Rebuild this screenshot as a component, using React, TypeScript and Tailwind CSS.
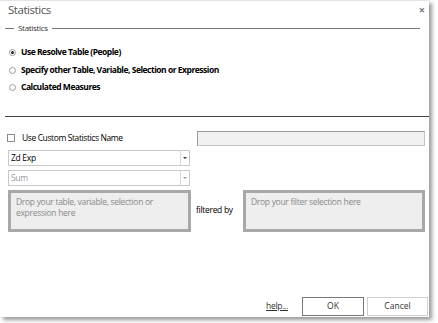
const font = { fontFamily: '"Segoe UI", "Open Sans", "Liberation Sans", sans-serif' };

function Radio({ checked, label }: { checked?: boolean; label: string }) {
  return (
    <div className="flex h-[17.5px] items-center pl-[9px]">
      <span className="flex h-[7px] w-[7px] items-center justify-center rounded-full border border-[#9a9a9a] bg-white">
        {checked && <span className="h-[3px] w-[3px] rounded-full bg-[#222]" />}
      </span>
      <span className="ml-[5px] text-[8.5px] font-bold tracking-[-0.48px] text-black">{label}</span>
    </div>
  );
}

function Select({ value, disabled }: { value: string; disabled?: boolean }) {
  return (
    <div className="flex h-[16px] w-[182px] border border-[#c8c8c8] bg-white">
      <span
        className={`flex-1 pl-[2px] text-[8.5px] leading-[14px] tracking-[-0.3px] ${
          disabled ? "text-[#9a9a9a]" : "text-black"
        }`}
      >
        {value}
      </span>
      <span className="flex w-[9px] items-center justify-center border-l border-[#d8d8d8]">
        <span
          className={`h-0 w-0 border-x-[2px] border-t-[2px] border-x-transparent ${
            disabled ? "border-t-[#999]" : "border-t-[#333]"
          }`}
        />
      </span>
    </div>
  );
}

function DropBox({ text, width }: { text: string; width: string }) {
  return (
    <div className={`${width} h-[42px] border-[3px] border-[#a8a8a8] bg-[#eeeeee] px-[5px] pt-[3px]`}>
      <p className="text-[8.5px] leading-[11px] tracking-[-0.3px] text-[#8a8a8a]">{text}</p>
    </div>
  );
}

export default function App() {
  return (
    <div className="h-[323px] w-[438px] bg-white" style={font}>
      <div className="flex h-[317px] w-[429px] flex-col border-t border-[#e4e4e4] bg-white shadow-[3px_3px_4px_rgba(0,0,0,0.4)]">
        <div className="flex h-[17px] items-center justify-between pl-[8px] pr-[4px]">
          <span className="text-[11.5px] tracking-[-0.45px] text-[#555]">Statistics</span>
          <span className="text-[11px] font-bold leading-none text-[#777]">×</span>
        </div>

        <div className="mt-[4px] flex items-center px-[5px]">
          <span className="h-px w-[9px] bg-[#777]" />
          <span className="mx-[4px] text-[8px] tracking-[-0.3px] text-[#333]">Statistics</span>
          <span className="h-px flex-1 bg-[#777]" />
          <span className="w-[4px]" />
        </div>

        <div className="mt-[10px]">
          <Radio checked label="Use Resolve Table (People)" />
          <Radio label="Specify other Table, Variable, Selection or Expression" />
          <Radio label="Calculated Measures" />
        </div>

        <div className="ml-[5px] mt-[19px] h-px bg-[#444]" />

        <div className="mt-[14px] flex items-center pl-[7px] pr-[4px]">
          <span className="h-[8px] w-[8px] border border-[#8a8a8a] bg-white" />
          <span className="ml-[7px] text-[8.5px] tracking-[-0.4px] text-black">Use Custom Statistics Name</span>
          <span className="ml-auto h-[15px] w-[228px] border border-[#c4c4c4] border-l-[#9a9a9a] border-t-[#9a9a9a] bg-[#f0f0f0]" />
        </div>

        <div className="mt-[4px] flex flex-col gap-[4px] pl-[8px]">
          <Select value="Zd Exp" />
          <Select value="Sum" disabled />
        </div>

        <div className="mt-[4px] flex items-center pl-[8px]">
          <DropBox width="w-[183px]" text="Drop your table, variable, selection or expression here" />
          <span className="ml-[5px] w-[47px] text-[8.5px] tracking-[-0.3px] text-black">filtered by</span>
          <DropBox width="w-[182px]" text="Drop your filter selection here" />
        </div>

        <div className="mt-auto flex items-center pb-[1px] pr-px">
          <a className="ml-[266px] text-[8.5px] tracking-[-0.3px] text-[#333] underline">help...</a>
          <button className="ml-auto h-[19px] w-[62px] border border-[#777] bg-white text-[8.5px] text-[#333]">OK</button>
          <button className="ml-[3px] h-[19px] w-[61px] border border-[#cfcfcf] bg-white text-[8.5px] text-[#333]">Cancel</button>
        </div>
      </div>
    </div>
  );
}
